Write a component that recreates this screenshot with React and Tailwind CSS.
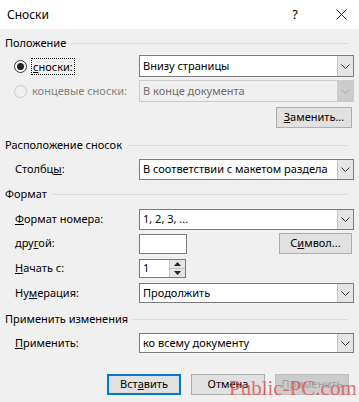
import React from "react";

const Chevron = ({ disabled }) => (
  <svg width="9" height="5" viewBox="0 0 9 5">
    <path d="M0.5 0.5 L4.5 4.5 L8.5 0.5" fill="none" stroke={disabled ? "#a8a8a8" : "#333"} strokeWidth="1" />
  </svg>
);

const Select = ({ value, disabled, h = "h-[22px]" }) => (
  <div
    className={`flex w-[215px] ${h} border ${
      disabled ? "border-[#cccccc] bg-[#f0f0f0] text-[#6d6d6d]" : "border-[#7a7a7a] bg-white text-black"
    }`}
  >
    <div className="flex-1 flex items-center pl-[3px] whitespace-nowrap overflow-hidden">{value}</div>
    <div
      className={`w-[16px] flex items-center justify-center ${
        disabled ? "bg-[#cccccc]" : "bg-[#e5e5e5] border-l border-[#c4c4c4]"
      }`}
    >
      <Chevron disabled={disabled} />
    </div>
  </div>
);

const Header = ({ text, className = "" }) => (
  <div className={`flex items-center h-[16px] pr-[11px] ${className}`}>
    <span className="whitespace-nowrap">{text}</span>
    <div className="flex-1 h-px bg-[#dcdcdc] ml-[5px]" />
  </div>
);

const Btn = ({ children, w = "w-[74px]", primary, disabled, className = "" }) => (
  <div
    className={`${w} h-[21px] flex items-center justify-center ${
      primary
        ? "border-2 border-[#0078d7] bg-[#e1e1e1]"
        : disabled
        ? "border border-[#bfbfbf] bg-[#cccccc] text-[#a0a0a0]"
        : "border border-[#adadad] bg-[#e1e1e1]"
    } ${className}`}
  >
    {children}
  </div>
);

const Row = ({ label, children, className = "" }) => (
  <div className={`flex items-center ${className}`}>
    <div className="w-[134px] pl-[10px] whitespace-nowrap">{label}</div>
    {children}
  </div>
);

export default function App() {
  return (
    <div
      className="relative w-[359px] h-[402px] bg-[#f0f0f0] text-black text-[11px] overflow-hidden"
      style={{ fontFamily: '"Noto Sans", "Open Sans", sans-serif' }}
    >
      {/* Title bar */}
      <div className="h-[29px] bg-white flex items-center pl-[7px] pr-[12px] text-[12px]">
        <span>Сноски</span>
        <span className="ml-auto mr-[38px] text-[13px]">?</span>
        <svg width="11" height="11" viewBox="0 0 11 11">
          <path d="M0.5 0.5 L10.5 10.5 M10.5 0.5 L0.5 10.5" stroke="#222" strokeWidth="1" />
        </svg>
      </div>

      <div className="pl-[5px]">
        <Header text="Положение" className="mt-[6px]" />

        {/* footnotes radio */}
        <div className="flex items-center mt-[4px] h-[22px]">
          <div className="w-[134px] flex items-center pl-[9px]">
            <div className="w-[13px] h-[13px] rounded-full border border-[#333] flex items-center justify-center bg-white">
              <div className="w-[7px] h-[7px] rounded-full bg-[#222]" />
            </div>
            <span className="ml-[4px] px-px border border-dotted border-black leading-[15px]">
              <u>с</u>носки:
            </span>
          </div>
          <Select value="Внизу страницы" />
        </div>

        {/* endnotes radio */}
        <div className="flex items-center mt-[3px] h-[22px]">
          <div className="w-[134px] flex items-center pl-[9px] text-[#838383]">
            <div className="w-[13px] h-[13px] rounded-full border border-[#cccccc] bg-[#f0f0f0]" />
            <span className="ml-[5px]">концевые сноски:</span>
          </div>
          <Select value="В конце документа" disabled />
        </div>

        <div className="flex mt-[5px] pr-[7px]">
          <Btn w="w-[76px]" className="ml-auto h-[20px]">
            <span>
              <u>З</u>аменить...
            </span>
          </Btn>
        </div>

        <Header text="Расположение сносок" className="mt-[9px]" />
        <Row
          className="mt-[6px]"
          label={
            <span>
              Столбц<u>ы</u>:
            </span>
          }
        >
          <Select value="В соответствии с макетом раздела" h="h-[21px]" />
        </Row>

        <Header text="Формат" className="mt-[6px]" />
        <Row
          className="mt-[7px]"
          label={
            <span>
              <u>Ф</u>ормат номера:
            </span>
          }
        >
          <Select value="1, 2, 3, ..." h="h-[21px]" />
        </Row>

        <Row
          className="mt-[3px]"
          label={
            <span>
              дру<u>г</u>ой:
            </span>
          }
        >
          <div className="w-[48px] h-[20px] border border-[#7a7a7a] bg-white" />
          <Btn w="w-[73px]" className="ml-auto mr-[7px]">
            <span>
              С<u>и</u>мвол...
            </span>
          </Btn>
        </Row>

        <Row
          className="mt-[5px]"
          label={
            <span>
              <u>Н</u>ачать с:
            </span>
          }
        >
          <div className="flex w-[47px] h-[19px] border border-[#7a7a7a] bg-white">
            <div className="flex-1 flex items-center pl-[3px]">1</div>
            <div className="w-[16px] flex flex-col bg-[#e5e5e5] border-l border-[#c4c4c4]">
              <div className="flex-1 flex items-center justify-center border-b border-[#c4c4c4]">
                <svg width="7" height="4" viewBox="0 0 7 4">
                  <path d="M0 4 L3.5 0 L7 4 Z" fill="#222" />
                </svg>
              </div>
              <div className="flex-1 flex items-center justify-center">
                <svg width="7" height="4" viewBox="0 0 7 4">
                  <path d="M0 0 L3.5 4 L7 0 Z" fill="#222" />
                </svg>
              </div>
            </div>
          </div>
        </Row>

        <Row
          className="mt-[5px]"
          label={
            <span>
              Ну<u>м</u>ерация:
            </span>
          }
        >
          <Select value="Продолжить" h="h-[20px]" />
        </Row>

        <Header text="Применить изменения" className="mt-[8px]" />
        <Row
          className="mt-[6px]"
          label={
            <span>
              <u>П</u>рименить:
            </span>
          }
        >
          <Select value="ко всему документу" h="h-[20px]" />
        </Row>

        <div className="flex mt-[21px] pl-[102px] gap-[10px]">
          <Btn primary>
            <span>
              Вст<u>а</u>вить
            </span>
          </Btn>
          <Btn>Отмена</Btn>
          <Btn disabled>Применить</Btn>
        </div>
      </div>

      {/* watermark */}
      <div
        className="absolute left-[229px] top-[376px] text-[21px] leading-[24px] text-[#e2585c]/85 whitespace-nowrap"
        style={{ fontFamily: '"Liberation Serif", serif' }}
      >
        Public-PC.com
      </div>
    </div>
  );
}
